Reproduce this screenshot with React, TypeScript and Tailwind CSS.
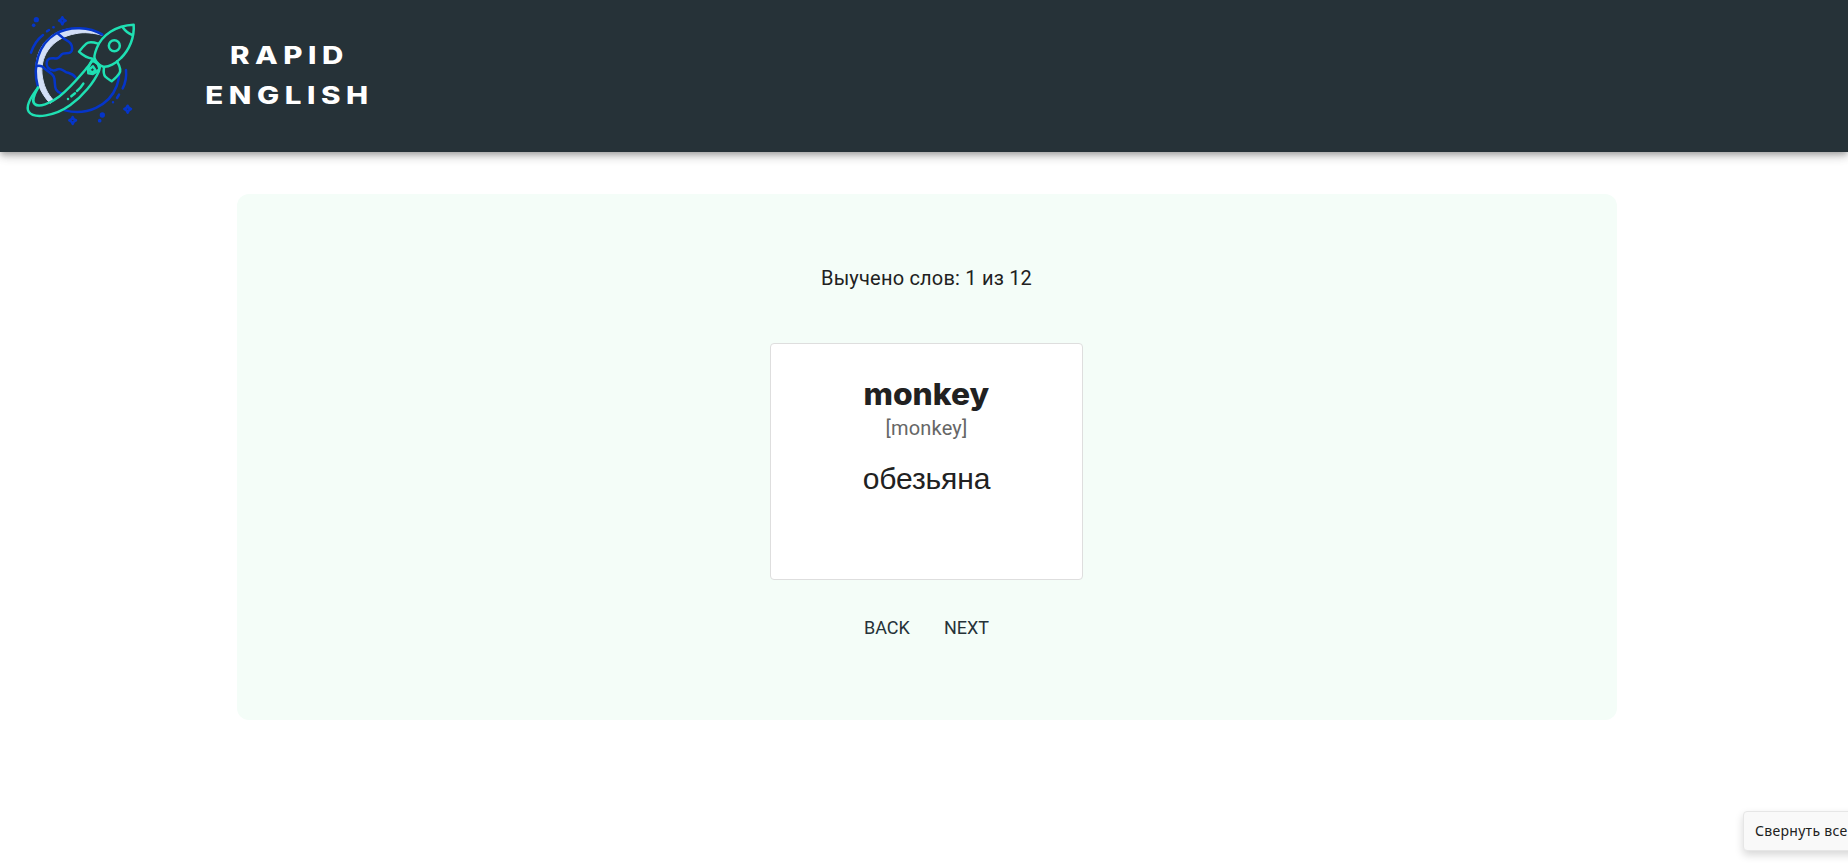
function Logo() {
  return (
    <svg viewBox="0 0 420 420" className="block size-[140px]" fill="none" strokeLinecap="round" strokeLinejoin="round">
      <path d="M78 198C80 140 122 92 182 86C218 82 255 92 277 106C252 99 222 95 197 101C132 112 91 161 96 222C100 256 112 282 131 301L120 310C88 275 75 237 78 198Z" fill="#d3dff7" stroke="#d3dff7" strokeWidth="3" />
      <g stroke="#0535c9" strokeWidth="7.5">
        <path d="M277 104C240 80 178 77 136 102C86 132 67 199 83 258" />
        <path d="M165 331C228 348 298 318 320 258C324 246 327 236 327 225" />
        <path d="M144 101C156 113 165 119 175 124C185 131 189 144 185 153C180 163 168 158 159 161C150 164 151 173 142 175C132 177 128 172 118 176C109 180 107 194 114 203C122 212 132 214 142 208C151 203 158 211 166 215C173 220 186 217 197 233" />
        <path d="M81 198C90 196 98 199 104 206C112 214 125 218 131 229C137 242 132 256 138 268C144 278 150 278 156 281" />
        <path d="M63 158C70 137 82 118 99 105M111 94L117 90M130 82L131 82" />
        <path d="M348 210C350 232 345 252 338 265M327 284L321 294M309 307L309 307" />
      </g>
      <g stroke="#0535c9" strokeWidth="7.5">
        <path d="M157 52Q159 60 167 62Q159 65 157 73Q155 65 147 62Q155 60 157 52Z" />
        <path d="M188 351Q190 359 198 361Q190 364 188 372Q186 364 178 361Q186 359 188 351Z" />
        <path d="M353 317Q355 325 363 327Q355 330 353 338Q351 330 343 327Q351 325 353 317Z" />
      </g>
      <g fill="#0535c9">
        <circle cx="79" cy="59" r="8" />
        <circle cx="71" cy="76" r="5.5" />
        <circle cx="277" cy="345" r="8" />
        <circle cx="269" cy="362" r="5.5" />
      </g>
      <g stroke="#1fe0b3" strokeWidth="7.5">
        <path d="M371 74C318 76 275 105 260 145C254 160 250 171 255 178C260 189 272 198 280 200C295 202 318 190 333 174C358 149 374 112 371 74Z" />
        <path d="M338 82C345 92 356 101 367 105" />
        <circle cx="313" cy="137" r="16.5" />
        <path d="M264 131C249 126 237 124 229 131C221 138 214 146 207 155C217 165 230 174 248 176" />
        <path d="M282 202C280 215 281 224 286 230C292 236 299 240 305 244C313 237 322 230 328 220C335 210 328 196 321 184" />
        <path d="M84 263C62 291 46 319 56 335C72 359 137 347 180 316C220 287 252 246 266 215C269 208 269 202 265 197" />
        <path d="M84 263C72 285 64 303 74 312C86 324 121 310 147 290C180 265 209 229 234 200C240 193 242 188 246 181" />
        <path d="M249 183C239 188 237 198 234 207L235 220L249 222C259 217 267 213 270 201C266 192 258 186 249 183Z" />
        <path d="M249 199L257 211L246 218L237 209Z" />
        <path d="M251 180L270 199" />
        <path d="M220 251C214 261 208 267 201 273M195 280L184 289M174 297L174 297" />
      </g>
    </svg>
  );
}

export default function App() {
  return (
    <div className="flex h-[863px] flex-col overflow-hidden bg-white font-['Roboto',sans-serif] text-[#212121]">
      <header className="flex h-[152px] shrink-0 items-start bg-[#263238] pl-[10px] shadow-[0_3px_5px_-1px_rgba(0,0,0,0.2),0_5px_8px_0_rgba(0,0,0,0.14),0_1px_14px_0_rgba(0,0,0,0.12)]">
        <Logo />
        <h1 className="ml-[33px] flex w-[206px] flex-col items-center pt-[36px] font-['Inter',sans-serif] text-[24px] leading-10 font-extrabold tracking-[4.5px] text-white">
          <span className="-mr-[6px] block scale-x-[1.23]">RAPID</span>
          <span className="-mr-[6px] block scale-x-[1.23]">ENGLISH</span>
        </h1>
      </header>
      <main className="mt-[42px] ml-[237px] flex h-[526px] w-[1380px] shrink-0 flex-col items-center rounded-xl bg-[#f4fdf8] pr-px">
        <p className="mt-[68px] text-[20px] leading-8 tracking-[0.2px]">Выучено слов: 1 из 12</p>
        <section className="mt-[49px] flex h-[237px] w-[313px] flex-col items-center rounded-[4px] border border-[#dedede] bg-white">
          <h2 className="mt-[30px] scale-x-[1.06] font-['Inter',sans-serif] text-[30px] leading-10 font-extrabold">monkey</h2>
          <p className="mt-[-2px] text-[20px] leading-8 tracking-[0.2px] text-[#666]">[monkey]</p>
          <p className="mt-[15px] font-['Liberation_Sans',sans-serif] text-[30px] leading-10 tracking-[-0.1px]">обезьяна</p>
        </section>
        <div className="mt-[32px] flex gap-[34px] text-[18px] leading-8 text-[#263238]">
          <button type="button">BACK</button>
          <button type="button">NEXT</button>
        </div>
      </main>
      <div className="mt-[91px] ml-[1743px] flex h-[40px] w-[120px] shrink-0 items-center rounded-[4px] border border-[#e6e6e6] bg-[#f9f9f9] pb-[2px] pl-[11px] font-['Noto_Sans',sans-serif] text-[14px] tracking-[0.3px] whitespace-nowrap shadow-[0_4px_8px_rgba(0,0,0,0.16)]">
        Свернуть все
      </div>
    </div>
  );
}
